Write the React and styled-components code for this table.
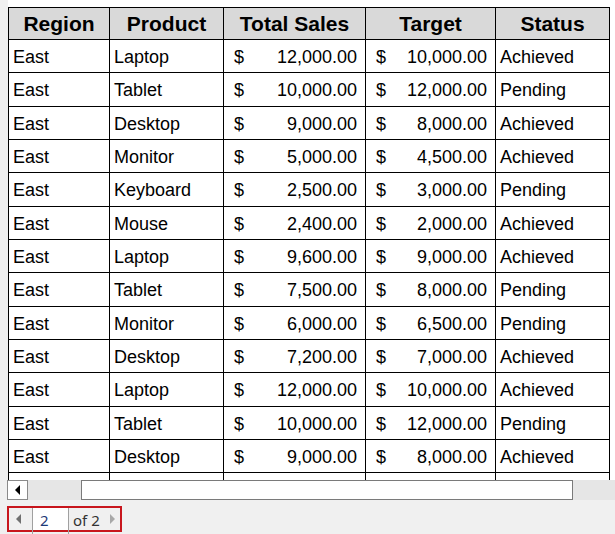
import React from 'react';
import styled, { createGlobalStyle } from 'styled-components';

const GlobalStyle = createGlobalStyle`
    html, body {
        margin: 0;
        padding: 0;
        background: #f0f0f0;
    }
    body {
        width: 615px;
        height: 534px;
        overflow: hidden;
    }
`;

const Page = styled.div`
    width: 615px;
    height: 534px;
    display: flex;
    flex-direction: column;
    background: #f0f0f0;
`;

const Viewer = styled.div`
    display: flex;
    height: 480px;
    overflow: hidden;
`;

const Gutter = styled.div`
    width: 8px;
    flex: none;
    background: #f0f0f0;
`;

const ReportArea = styled.div`
    flex: 1;
    background: #fff;
    padding-top: 7px;
    overflow: hidden;
`;

const Table = styled.table`
    border-collapse: collapse;
    table-layout: fixed;
    width: 601px;
    font-family: 'Liberation Sans', Arial, sans-serif;
    color: #000;
`;

const HeadCell = styled.th`
    height: 31px;
    padding: 0;
    border: 1px solid #000;
    background: #d9d9d9;
    font-size: 21px;
    font-weight: 700;
    text-align: center;
    line-height: 1;
`;

const Row = styled.tr`
    height: 33.333px;
`;

const Cell = styled.td`
    padding: 2px 3px 0 4px;
    border: 1px solid #000;
    font-size: 18px;
    line-height: 1;
    white-space: nowrap;
    overflow: hidden;
`;

const MoneyCell = styled(Cell)`
    padding: 2px 8px 0 10px;
`;

const Money = styled.div`
    display: flex;
    justify-content: space-between;
`;

const ScrollBar = styled.div`
    height: 20px;
    margin-left: 7px;
    display: flex;
    background: #e6e6e6;
`;

const ArrowButton = styled.div`
    width: 19px;
    height: 18px;
    border: 1px solid #8a8a8a;
    background: #fff;
    display: flex;
    align-items: center;
    justify-content: center;
    box-sizing: content-box;
`;

const Track = styled.div`
    width: ${(p) => p.w}px;
    flex: none;
`;

const Thumb = styled.div`
    width: 490px;
    height: 18px;
    border: 1px solid #7a7a7a;
    background: #fff;
`;

const Toolbar = styled.div`
    flex: 1;
    padding: 6px 0 0 7px;
    display: flex;
    align-items: flex-start;
`;

const Pager = styled.div`
    width: 111px;
    height: 22px;
    border: 2px solid #c8161d;
    display: flex;
    align-items: flex-start;
    font-family: 'Noto Sans', 'Open Sans', sans-serif;
    font-size: 15px;
    line-height: 22px;
`;

const PagerArrow = styled.div`
    width: 23px;
    height: 22px;
    box-sizing: border-box;
    padding-left: 7px;
    display: flex;
    align-items: center;
`;

const PageInput = styled.div`
    width: 37px;
    height: 28px;
    box-sizing: border-box;
    padding: 1px 0 0 7px;
    background: linear-gradient(#fff 22px, transparent 22px);
    color: #1e3a78;
    border-left: 1px solid #a0a0a0;
    border-right: 1px solid #a0a0a0;
    margin-bottom: -6px;
`;

const PageCount = styled.div`
    flex: 1;
    padding: 1px 0 0 4px;
    color: #333;
`;

const NextArrow = styled.div`
    width: 10px;
    height: 22px;
    display: flex;
    align-items: center;
`;

const rows = [
    ['East', 'Laptop', '12,000.00', '10,000.00', 'Achieved'],
    ['East', 'Tablet', '10,000.00', '12,000.00', 'Pending'],
    ['East', 'Desktop', '9,000.00', '8,000.00', 'Achieved'],
    ['East', 'Monitor', '5,000.00', '4,500.00', 'Achieved'],
    ['East', 'Keyboard', '2,500.00', '3,000.00', 'Pending'],
    ['East', 'Mouse', '2,400.00', '2,000.00', 'Achieved'],
    ['East', 'Laptop', '9,600.00', '9,000.00', 'Achieved'],
    ['East', 'Tablet', '7,500.00', '8,000.00', 'Pending'],
    ['East', 'Monitor', '6,000.00', '6,500.00', 'Pending'],
    ['East', 'Desktop', '7,200.00', '7,000.00', 'Achieved'],
    ['East', 'Laptop', '12,000.00', '10,000.00', 'Achieved'],
    ['East', 'Tablet', '10,000.00', '12,000.00', 'Pending'],
    ['East', 'Desktop', '9,000.00', '8,000.00', 'Achieved'],
];

const Triangle = ({ dir, color }) => (
    <svg width='5' height='10' viewBox='0 0 5 10'>
        <polygon points={dir === 'left' ? '5,0 5,10 0,5' : '0,0 0,10 5,5'} fill={color} />
    </svg>
);

const App = () => {
    return (
        <Page>
            <GlobalStyle />
            <Viewer>
                <Gutter />
                <ReportArea>
                    <Table>
                        <colgroup>
                            <col style={{ width: 101 }} />
                            <col style={{ width: 114 }} />
                            <col style={{ width: 142 }} />
                            <col style={{ width: 130 }} />
                            <col style={{ width: 114 }} />
                        </colgroup>
                        <thead>
                            <tr>
                                <HeadCell>Region</HeadCell>
                                <HeadCell>Product</HeadCell>
                                <HeadCell>Total Sales</HeadCell>
                                <HeadCell>Target</HeadCell>
                                <HeadCell>Status</HeadCell>
                            </tr>
                        </thead>
                        <tbody>
                            {rows.map((r, i) => (
                                <Row key={i}>
                                    <Cell>{r[0]}</Cell>
                                    <Cell>{r[1]}</Cell>
                                    <MoneyCell>
                                        <Money>
                                            <span>$</span>
                                            <span>{r[2]}</span>
                                        </Money>
                                    </MoneyCell>
                                    <MoneyCell>
                                        <Money>
                                            <span>$</span>
                                            <span>{r[3]}</span>
                                        </Money>
                                    </MoneyCell>
                                    <Cell>{r[4]}</Cell>
                                </Row>
                            ))}
                            <Row>
                                <Cell />
                                <Cell />
                                <Cell />
                                <Cell />
                                <Cell />
                            </Row>
                        </tbody>
                    </Table>
                </ReportArea>
            </Viewer>
            <ScrollBar>
                <ArrowButton>
                    <Triangle dir='left' color='#000' />
                </ArrowButton>
                <Track w={53} />
                <Thumb />
            </ScrollBar>
            <Toolbar>
                <Pager>
                    <PagerArrow>
                        <Triangle dir='left' color='#707070' />
                    </PagerArrow>
                    <PageInput>2</PageInput>
                    <PageCount>of 2</PageCount>
                    <NextArrow>
                        <Triangle dir='right' color='#a8a8a8' />
                    </NextArrow>
                </Pager>
            </Toolbar>
        </Page>
    );
};

export default App;
